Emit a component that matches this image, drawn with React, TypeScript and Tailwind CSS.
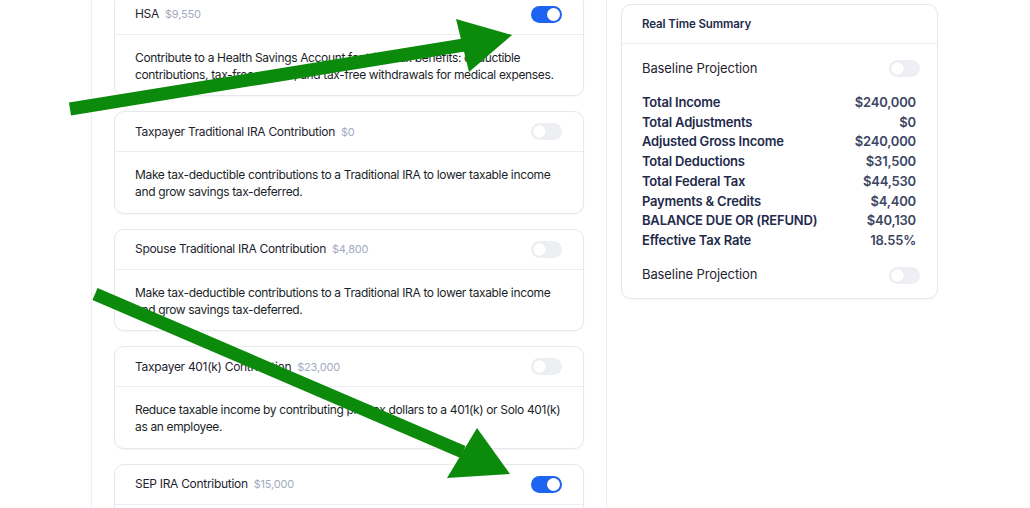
import React from "react"

type Contribution = {
  title: string
  amount: string
  enabled: boolean
  description: string
}

const contributions: Contribution[] = [
  {
    title: "HSA",
    amount: "$9,550",
    enabled: true,
    description:
      "Contribute to a Health Savings Account for triple tax benefits: deductible contributions, tax-free growth, and tax-free withdrawals for medical expenses.",
  },
  {
    title: "Taxpayer Traditional IRA Contribution",
    amount: "$0",
    enabled: false,
    description:
      "Make tax-deductible contributions to a Traditional IRA to lower taxable income and grow savings tax-deferred.",
  },
  {
    title: "Spouse Traditional IRA Contribution",
    amount: "$4,800",
    enabled: false,
    description:
      "Make tax-deductible contributions to a Traditional IRA to lower taxable income and grow savings tax-deferred.",
  },
  {
    title: "Taxpayer 401(k) Contribution",
    amount: "$23,000",
    enabled: false,
    description:
      "Reduce taxable income by contributing pre-tax dollars to a 401(k) or Solo 401(k) as an employee.",
  },
  {
    title: "SEP IRA Contribution",
    amount: "$15,000",
    enabled: true,
    description:
      "Self-employed individuals can contribute a portion of net earnings to a SEP IRA and deduct it from taxable income.",
  },
]

const summaryRows: [string, string][] = [
  ["Total Income", "$240,000"],
  ["Total Adjustments", "$0"],
  ["Adjusted Gross Income", "$240,000"],
  ["Total Deductions", "$31,500"],
  ["Total Federal Tax", "$44,530"],
  ["Payments & Credits", "$4,400"],
  ["BALANCE DUE OR (REFUND)", "$40,130"],
  ["Effective Tax Rate", "18.55%"],
]

function Toggle({ on }: { on: boolean }) {
  return (
    <div
      className={`flex h-[17px] w-[31px] shrink-0 items-center rounded-full p-[2px] ${
        on ? "justify-end bg-[#1d64f2]" : "justify-start bg-[#eeeff2]"
      }`}
    >
      <div className="h-[13px] w-[13px] rounded-full bg-white shadow-[0_0_1px_rgba(0,0,0,0.15)]" />
    </div>
  )
}

function ContributionCard({ item }: { item: Contribution }) {
  return (
    <div className="rounded-[10px] border border-[#e6e8ee] bg-white shadow-[0_1px_2px_rgba(16,24,40,0.04)]">
      <div className="flex h-[39px] items-center justify-between pl-5 pr-[21px]">
        <div className="flex items-baseline gap-[6px]">
          <span className="text-[12px] tracking-[-0.3px] text-[#1f2430]">{item.title}</span>
          <span className="text-[11px] tracking-[-0.2px] text-[#a3aac0]">{item.amount}</span>
        </div>
        <Toggle on={item.enabled} />
      </div>
      <div className="border-t border-[#eceef2] px-5 pt-[14px] pb-[12.5px] text-[12px] leading-[17px] tracking-[-0.35px] text-[#1b1f29]">
        {item.description}
      </div>
    </div>
  )
}

function SummaryCard() {
  return (
    <div className="rounded-[10px] border border-[#e6e8ee] bg-white shadow-[0_1px_2px_rgba(16,24,40,0.04)]">
      <div className="flex h-[39px] items-center border-b border-[#eceef2] px-5 pt-[2px]">
        <span className="text-[11.5px] font-semibold tracking-[-0.1px] text-[#1e2a4a]">Real Time Summary</span>
      </div>
      <div className="flex flex-col gap-[16px] pt-[16px] pb-[14px]">
        <div className="flex h-[17px] items-center justify-between pl-5 pr-[17px]">
          <span className="text-[13px] tracking-[-0.1px] text-[#1f2430]">Baseline Projection</span>
          <Toggle on={false} />
        </div>
        <div className="flex flex-col pl-[20px] pr-[21px]">
          {summaryRows.map(([label, value]) => (
            <div key={label} className="flex justify-between text-[13px] leading-[19.7px] font-semibold tracking-[-0.2px]">
              <span className="text-[#1e2a4a]">{label}</span>
              <span className="text-[#3c4662]">{value}</span>
            </div>
          ))}
        </div>
        <div className="flex h-[17px] items-center justify-between pl-5 pr-[17px]">
          <span className="text-[13px] tracking-[-0.1px] text-[#1f2430]">Baseline Projection</span>
          <Toggle on={false} />
        </div>
      </div>
    </div>
  )
}

// green annotation arrows drawn over the screenshot
function Arrows() {
  return (
    <svg
      className="pointer-events-none absolute inset-0"
      width="1030"
      height="508"
      viewBox="0 0 1030 508"
    >
      <line x1="70" y1="109" x2="464" y2="45" stroke="#0b8a0b" strokeWidth="13" />
      <polygon points="456,19 512,35 469,72" fill="#0b8a0b" />
      <line x1="95" y1="294" x2="463" y2="452" stroke="#0b8a0b" strokeWidth="13" />
      <polygon points="477,428 510,474 447,478" fill="#0b8a0b" />
    </svg>
  )
}

export default function App() {
  return (
    <div className="relative h-[508px] w-[1030px] overflow-hidden bg-white font-['Inter',sans-serif]">
      <div className="flex h-full gap-[14px] pl-[91px]">
        <div className="w-[516px] shrink-0 border-x border-[#eceef3] px-[22px]">
          <div className="-mt-[6.5px] flex flex-col gap-[15px]">
            {contributions.map((item) => (
              <ContributionCard key={item.title} item={item} />
            ))}
          </div>
        </div>
        <div className="w-[317px] shrink-0 pt-[4px]">
          <SummaryCard />
        </div>
      </div>
      <Arrows />
    </div>
  )
}
